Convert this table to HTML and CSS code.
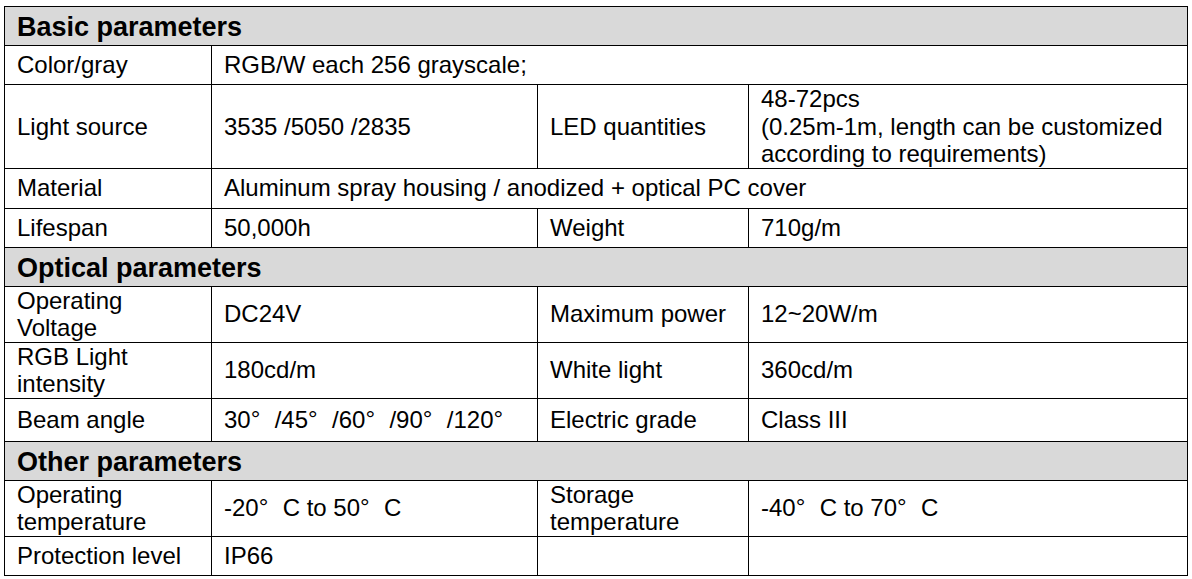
FILE: index.html
```html
<!DOCTYPE html>
<html>
<head>
<meta charset="utf-8">
<link rel="stylesheet" href="styles.css">
</head>
<body>
<table class="spec">
  <colgroup>
    <col class="c1"><col class="c2"><col class="c3"><col class="c4">
  </colgroup>
  <tr class="sec"><td colspan="4">Basic parameters</td></tr>
  <tr class="r39"><td>Color/gray</td><td colspan="3">RGB/W each 256 grayscale;</td></tr>
  <tr class="r84"><td>Light source</td><td>3535 /5050 /2835</td><td>LED quantities</td><td>48-72pcs<br>(0.25m-1m, length can be customized according to requirements)</td></tr>
  <tr class="r40"><td>Material</td><td colspan="3">Aluminum spray housing / anodized + optical PC cover</td></tr>
  <tr class="r39"><td>Lifespan</td><td>50,000h</td><td>Weight</td><td>710g/m</td></tr>
  <tr class="sec"><td colspan="4">Optical parameters</td></tr>
  <tr class="r56"><td>Operating<br>Voltage</td><td>DC24V</td><td>Maximum power</td><td>12~20W/m</td></tr>
  <tr class="r56"><td>RGB Light<br>intensity</td><td>180cd/m</td><td>White light</td><td>360cd/m</td></tr>
  <tr class="r42"><td>Beam angle</td><td>30<span class="deg">°</span>/45<span class="deg">°</span>/60<span class="deg">°</span>/90<span class="deg">°</span>/120<span class="deg">°</span></td><td>Electric grade</td><td>Class III</td></tr>
  <tr class="sec"><td colspan="4">Other parameters</td></tr>
  <tr class="r56"><td>Operating<br>temperature</td><td>-20<span class="deg">°</span>C to 50<span class="deg">°</span>C</td><td>Storage<br>temperature</td><td>-40<span class="deg">°</span>C to 70<span class="deg">°</span>C</td></tr>
  <tr class="r39"><td>Protection level</td><td>IP66</td><td></td><td></td></tr>
</table>
</body>
</html>
```

FILE: styles.css
```css
html, body {
  margin: 0;
  padding: 0;
  background: #ffffff;
}

body {
  padding: 6px 0 0 4px;
  font-family: "Liberation Sans", Arial, sans-serif;
  color: #000;
}

.spec {
  border-collapse: collapse;
  table-layout: fixed;
  width: 1183px;
  font-size: 24px;
  line-height: 27.5px;
}

.c1 { width: 207px; }
.c2 { width: 326px; }
.c3 { width: 211px; }
.c4 { width: 439px; }

.spec td {
  border: 1px solid #000;
  padding: 0 12px;
  vertical-align: middle;
  text-align: left;
}

.sec td {
  background: #d9d9d9;
  font-weight: bold;
  font-size: 27px;
  height: 34px;
  padding-top: 4px;
}

.r39 td { height: 38px; }
.r40 td { height: 39px; }
.r42 td { height: 42px; }
.r56 td { height: 55px; }
.r84 td { height: 82px; }

.deg {
  display: inline-block;
  width: 1em;
  position: relative;
  top: -1px;
}
```
